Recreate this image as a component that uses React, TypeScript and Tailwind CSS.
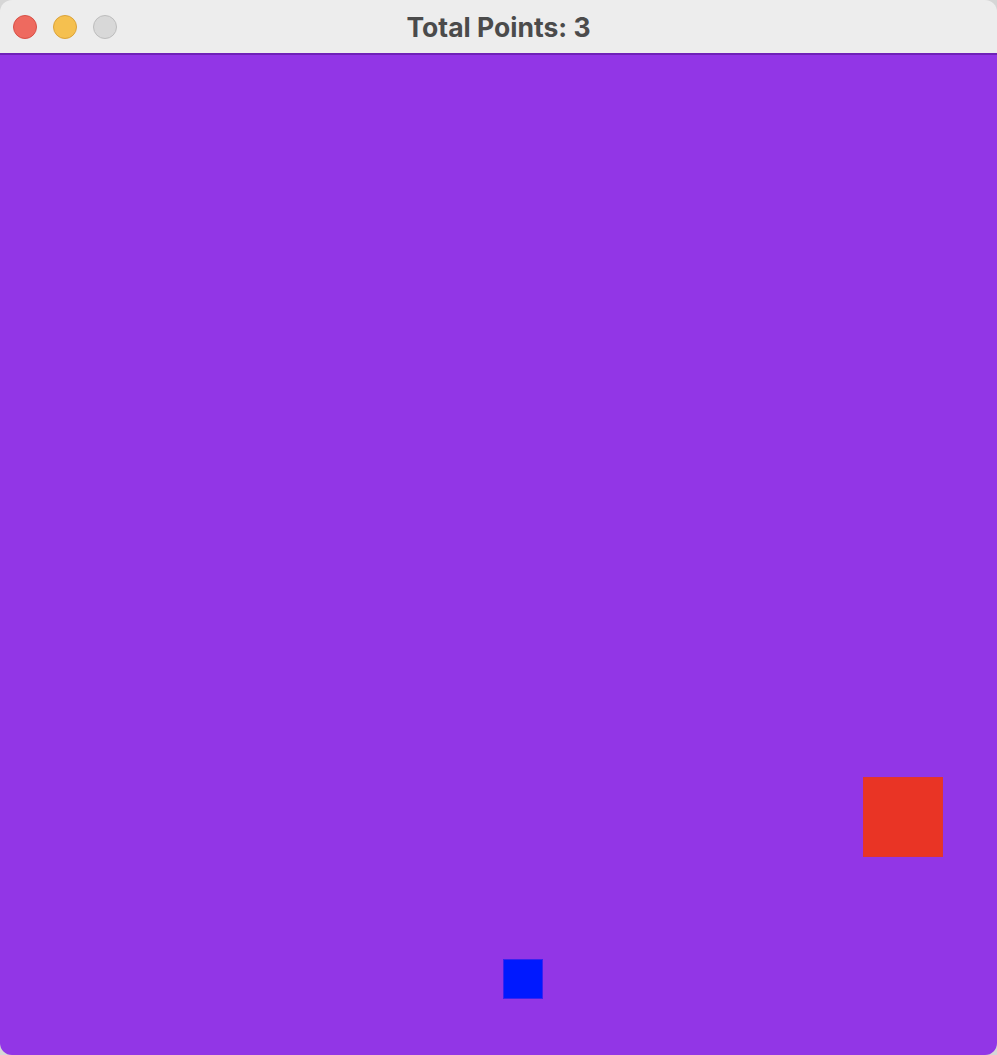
import React from 'react';

export default function App() {
  const points = 3;

  return (
    <div className="w-[997px] h-[1055px] bg-[#d6d6d6]">
      {/* Window */}
      <div className="w-full h-full flex flex-col rounded-[12px] overflow-hidden">
        {/* Title bar */}
        <div className="relative h-[55px] shrink-0 pt-[2px] bg-[#ededed] border-b-2 border-[#6f22b8] flex items-center justify-center">
          <div className="absolute left-[13px] top-[15px] flex gap-[16px]">
            <span className="w-[24px] h-[24px] rounded-full bg-[#ee6a5f] border border-[#d85046]" />
            <span className="w-[24px] h-[24px] rounded-full bg-[#f5c04f] border border-[#dba33a]" />
            <span className="w-[24px] h-[24px] rounded-full bg-[#d8d8d8] border border-[#bdbdbd]" />
          </div>
          <span className="text-[26.5px] font-bold text-[#4b4b4b] leading-none" style={{ fontFamily: 'Inter, "Noto Sans", sans-serif' }}>
            Total Points: {points}
          </span>
        </div>

        {/* Game canvas */}
        <div className="relative flex-1 bg-[#9236e6]">
          <div className="absolute left-[863px] top-[722px] w-[80px] h-[80px] bg-[#e93425] border border-[#e0352f]" />
          <div className="absolute left-[503px] top-[904px] w-[40px] h-[40px] bg-[#0019ff] border border-[#3a22f0]" />
        </div>
      </div>
    </div>
  );
}
